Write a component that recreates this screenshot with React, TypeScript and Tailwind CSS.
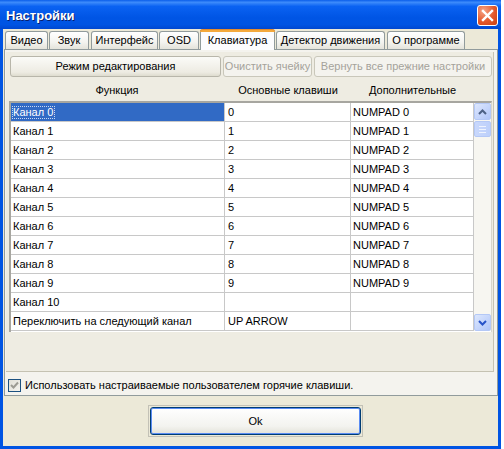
import React from "react";

const rows: [string, string, string][] = [
  ["Канал 0", "0", "NUMPAD 0"],
  ["Канал 1", "1", "NUMPAD 1"],
  ["Канал 2", "2", "NUMPAD 2"],
  ["Канал 3", "3", "NUMPAD 3"],
  ["Канал 4", "4", "NUMPAD 4"],
  ["Канал 5", "5", "NUMPAD 5"],
  ["Канал 6", "6", "NUMPAD 6"],
  ["Канал 7", "7", "NUMPAD 7"],
  ["Канал 8", "8", "NUMPAD 8"],
  ["Канал 9", "9", "NUMPAD 9"],
  ["Канал 10", "", ""],
  ["Переключить на следующий канал", "UP ARROW", ""],
];

function Tab({ label, w, ml, active }: { label: string; w: string; ml: string; active?: boolean }) {
  if (active) {
    return (
      <div
        className={`${w} ${ml} relative z-10 h-[21px] -mb-px flex items-center justify-center rounded-t-[3px] border-x border-[#919B9C] bg-[#FCFCFE]`}
      >
        <div className="absolute left-[-1px] right-[-1px] top-0 h-[3px] rounded-t-[3px] bg-[#F4A93C] border-t border-[#E68B2C]" />
        <span className="mt-[1px]">{label}</span>
      </div>
    );
  }
  return (
    <div
      className={`${w} ${ml} h-[18px] flex items-center justify-center rounded-t-[3px] border border-b-0 border-[#919B9C] bg-[linear-gradient(180deg,#FFFFFF_0%,#F3F3EF_60%,#E4E3DA_100%)]`}
    >
      {label}
    </div>
  );
}

function XpButton({ label, w, disabled }: { label: string; w: string; disabled?: boolean }) {
  return (
    <div
      className={`${w} h-[21px] flex items-center justify-center rounded-[3px] border ${
        disabled
          ? "border-[#C9C7BA] text-[#A4A29A] bg-[#F4F3EE]"
          : "border-[#B8B6AA] text-black bg-[linear-gradient(180deg,#FBFBF8_0%,#EDEBE2_80%,#DEDCCF_100%)]"
      }`}
    >
      {label}
    </div>
  );
}

export default function App() {
  return (
    <div
      className="w-[504px] h-[449px] bg-white flex text-[11px] text-black leading-none overflow-hidden whitespace-nowrap"
      style={{ fontFamily: '"Liberation Sans", Arial, sans-serif' }}
    >
      <div className="w-[501px] h-[449px] flex flex-col bg-[#0054E3]">
        {/* Title bar */}
        <div className="h-[29px] shrink-0 flex items-center justify-between pl-[6px] pr-[3px] bg-[linear-gradient(180deg,#0A5EEA_0%,#3D8BFB_8%,#0A62F2_22%,#0055E5_60%,#0054E3_85%,#0047D0_100%)]">
          <span className="text-white font-bold text-[13px] mt-[2px] [text-shadow:1px_1px_0_#0A1E6B]">
            Настройки
          </span>
          <div className="w-[21px] h-[21px] mt-[1px] rounded-[3px] border border-white bg-[radial-gradient(circle_at_30%_25%,#F6A486_0%,#E3582C_55%,#C93F12_100%)] flex items-center justify-center">
            <svg width="13" height="13" viewBox="0 0 13 13">
              <path d="M2 2 L11 11 M11 2 L2 11" stroke="white" strokeWidth="2.4" strokeLinecap="square" />
            </svg>
          </div>
        </div>

        {/* Body */}
        <div className="flex-1 flex flex-col bg-[#ECE9D8] ml-[3px] mr-[3px] mb-[3px] px-[1px]">
          {/* Tabs */}
          <div className="flex items-end h-[20px] pl-[1px]">
            <Tab label="Видео" w="w-[43px]" ml="ml-0" />
            <Tab label="Звук" w="w-[40px]" ml="ml-[1px]" />
            <Tab label="Интерфейс" w="w-[67px]" ml="ml-[2px]" />
            <Tab label="OSD" w="w-[40px]" ml="ml-[1px]" />
            <Tab label="Клавиатура" w="w-[75px]" ml="ml-[1px]" active />
            <Tab label="Детектор движения" w="w-[109px]" ml="ml-[1px]" />
            <Tab label="О программе" w="w-[78px]" ml="ml-[2px]" />
          </div>

          {/* Tab panel */}
          <div className="w-[494px] h-[347px] border border-[#919B9C] bg-[#F4F3EE] flex flex-col pt-[2px] pl-[1px]">
            {/* inner frame */}
            <div className="w-[488px] h-[322px] border-r border-b border-[#C5C2B2] bg-[#EEECE2] flex flex-col pl-[4px] pt-[4px]">
              <div className="flex gap-[2px] pl-[0px]">
                <XpButton label="Режим редактирования" w="w-[211px]" />
                <XpButton label="Очистить ячейку" w="w-[89px]" disabled />
                <XpButton label="Вернуть все прежние настройки" w="w-[178px]" disabled />
              </div>
              {/* header */}
              <div className="flex h-[22px] items-center ml-[-1px] mt-[2px]">
                <div className="w-[216px] text-center">Функция</div>
                <div className="w-[126px] text-center">Основные клавиши</div>
                <div className="w-[123px] text-center">Дополнительные</div>
              </div>
              {/* grid */}
              <div className="ml-[-1px] w-[483px] h-[231px] border-l-2 border-t-2 border-r border-[#A7A6A0] border-r-[#D8D6CC] flex bg-white">
                <div className="flex flex-col">
                  {rows.map((r, i) => (
                    <div key={i} className="flex h-[19px]">
                      <div
                        className={`w-[214px] h-[19px] border-r border-b border-[#C8C8C8] pl-[2px] flex items-center ${
                          i === 0 ? "bg-[#316AC5] text-white" : ""
                        }`}
                      >
                        <span className={i === 0 ? "outline outline-1 outline-dotted outline-[#C9D7F0] pr-[1px]" : ""}>
                          {r[0]}
                        </span>
                      </div>
                      <div className="w-[126px] h-[19px] border-r border-b border-[#C8C8C8] pl-[3px] flex items-center">
                        {r[1]}
                      </div>
                      <div className="w-[123px] h-[19px] border-r border-b border-[#C8C8C8] pl-[2px] flex items-center">
                        {r[2]}
                      </div>
                    </div>
                  ))}
                </div>
                {/* scrollbar */}
                <div className="w-[17px] h-[228px] flex flex-col bg-[#F7F6F1]">
                  <div className="w-[17px] h-[17px] rounded-[2px] border border-[#B4C8F6] bg-[linear-gradient(135deg,#DDE7FD_0%,#C2D3FB_60%,#B0C5F8_100%)] flex items-center justify-center">
                    <svg width="9" height="6" viewBox="0 0 9 6">
                      <path d="M1 5 L4.5 1.5 L8 5" stroke="#4D6185" strokeWidth="2" fill="none" />
                    </svg>
                  </div>
                  <div className="w-[17px] h-[16px] mt-[1px] rounded-[2px] border border-[#B4C8F6] bg-[linear-gradient(90deg,#C9D8FC_0%,#BDD0FB_100%)] flex flex-col items-center justify-center gap-[2px]">
                    <div className="w-[7px] h-px bg-[#EEF3FE]" />
                    <div className="w-[7px] h-px bg-[#EEF3FE]" />
                    <div className="w-[7px] h-px bg-[#EEF3FE]" />
                  </div>
                  <div className="flex-1" />
                  <div className="w-[17px] h-[17px] rounded-[2px] border border-[#B4C8F6] bg-[linear-gradient(135deg,#DDE7FD_0%,#C2D3FB_60%,#B0C5F8_100%)] flex items-center justify-center">
                    <svg width="9" height="6" viewBox="0 0 9 6">
                      <path d="M1 1 L4.5 4.5 L8 1" stroke="#2753C8" strokeWidth="2" fill="none" />
                    </svg>
                  </div>
                </div>
              </div>
            </div>

            {/* checkbox */}
            <div className="flex items-center h-[20px] mt-[3px] pl-[2px]">
              <div className="w-[13px] h-[13px] border border-[#1C5180] bg-[linear-gradient(135deg,#E0DFD6_0%,#F4F3EE_100%)] flex items-center justify-center">
                <svg width="9" height="8" viewBox="0 0 9 8">
                  <path d="M1 4 L3.5 6.5 L8 1.5" stroke="#9C9B93" strokeWidth="2" fill="none" />
                </svg>
              </div>
              <span className="ml-[4px]">Использовать настраиваемые пользователем горячие клавиши.</span>
            </div>
          </div>

          {/* OK button */}
          <div className="flex justify-center mt-[9px]">
            <div className="w-[215px] h-[32px] border border-[#C3C1B6] p-[1px] ml-[10px]">
              <div className="w-full h-full rounded-[3px] border border-[#003C74] bg-[linear-gradient(180deg,#FFFFFF_0%,#F3F3EF_70%,#E3E2D9_100%)] shadow-[inset_0_0_0_1px_#5A8CF3] flex items-center justify-center">
                Ok
              </div>
            </div>
          </div>
        </div>
      </div>
    </div>
  );
}
